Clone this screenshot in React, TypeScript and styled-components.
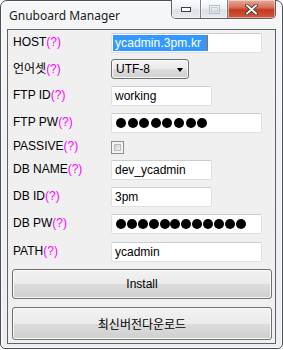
import React from "react";
import styled, { createGlobalStyle } from "styled-components";

const Global = createGlobalStyle`
  html, body { margin: 0; padding: 0; background: #ffffff; }
  body { font-family: "Liberation Sans", "Noto Sans CJK KR", sans-serif; font-size: 12px; color: #000; }
  * { box-sizing: border-box; }
`;

const Win = styled.div`
  width: 283px;
  height: 349px;
  border: 1px solid #4a4f55;
  border-radius: 7px 7px 5px 5px;
  background: linear-gradient(180deg, #f5f7f9 0%, #eff1f4 40%, #eceef1 100%);
  box-shadow: inset 0 0 0 1px rgba(255,255,255,0.85);
  display: flex;
  flex-direction: column;
  padding: 0 6px 4px 6px;
`;

const TitleBar = styled.div`
  height: 28px;
  display: flex;
  align-items: flex-start;
`;

const Title = styled.div`
  font-family: "Noto Sans", "Liberation Sans", sans-serif;
  font-size: 12px;
  line-height: 16px;
  color: #1a1a1a;
  padding: 7px 0 0 2px;
  flex: 1;
`;

const Caption = styled.div`
  display: flex;
  height: 19px;
  margin-top: -1px;
  border: 1px solid #5c6168;
  border-top: none;
  border-radius: 0 0 5px 5px;
  overflow: hidden;
  box-shadow: 0 1px 0 rgba(255,255,255,0.7);
`;

const CapBtn = styled.div<{ $w: number; $close?: boolean; $first?: boolean }>`
  width: ${(p) => p.$w}px;
  height: 100%;
  display: flex;
  align-items: center;
  justify-content: center;
  border-left: ${(p) => (p.$first ? "none" : "1px solid #7b8088")};
  background: ${(p) =>
    p.$close
      ? "linear-gradient(180deg, #e9a99a 0%, #d8735c 40%, #c53b1e 55%, #cf5a3f 100%)"
      : "linear-gradient(180deg, #fbfcfd 0%, #eef1f4 45%, #dde2e7 55%, #e6eaee 100%)"};
  box-shadow: inset 0 0 0 1px rgba(255,255,255,0.45);
`;

const Client = styled.div`
  flex: 1;
  border: 1px solid #5f6368;
  background: #f0f0f0;
  display: flex;
  flex-direction: column;
  padding-top: 3px;
`;

const Row = styled.div<{ $h: number }>`
  height: ${(p) => p.$h}px;
  display: flex;
  align-items: flex-start;
`;

const Label = styled.div<{ $off?: number }>`
  width: 103px;
  padding-left: 5px;
  line-height: 18px;
  margin-top: ${(p) => p.$off ?? 0}px;
  font-family: "Liberation Sans", "Noto Sans CJK KR", sans-serif;
  font-size: 12px;
  white-space: nowrap;
`;

const Help = styled.span`
  color: #ff00ff;
`;

const TextBox = styled.div<{ $w: number }>`
  width: ${(p) => p.$w}px;
  height: 20px;
  background: #fff;
  border: 1px solid #dcdfe3;
  border-top-color: #c9ccd1;
  border-radius: 2px;
  display: flex;
  align-items: center;
  padding-left: 3px;
  font-size: 12px;
  line-height: 16px;
  white-space: nowrap;
`;

const Selected = styled.span`
  background: #3399ff;
  color: #fff;
  line-height: 16px;
  padding-right: 6px;
  margin-left: -2px;
  padding-left: 2px;
  letter-spacing: 0.1px;
`;

const Caret = styled.span`
  display: inline-block;
  width: 1px;
  height: 16px;
  background: #b5651d;
`;

const Dots = styled.div<{ $gap: number }>`
  display: flex;
  gap: ${(p) => p.$gap}px;
  padding-left: 1px;
`;

const Dot = styled.span`
  width: 10px;
  height: 10px;
  border-radius: 50%;
  background: #000;
`;

const Select = styled.div`
  width: 78px;
  height: 20px;
  margin-top: -1px;
  border: 1px solid #707070;
  border-radius: 3px;
  background: linear-gradient(180deg, #f2f2f2 0%, #ebebeb 50%, #dddddd 50%, #cfcfcf 100%);
  box-shadow: inset 0 0 0 1px rgba(255,255,255,0.8);
  display: flex;
  align-items: center;
  justify-content: space-between;
  padding: 0 5px 0 4px;
  font-size: 12px;
`;

const Arrow = styled.span`
  width: 0;
  height: 0;
  border-left: 3.5px solid transparent;
  border-right: 3.5px solid transparent;
  border-top: 4px solid #000;
  margin-top: 1px;
`;

const Check = styled.div`
  width: 13px;
  height: 13px;
  margin-top: 1px;
  border: 1px solid #8e8f8f;
  background: #f4f4f4;
  padding: 2px;
  display: flex;
`;

const CheckInner = styled.div`
  flex: 1;
  border: 1px solid #b8bcc2;
  background: linear-gradient(135deg, #c9cdd2 0%, #e3e5e8 60%, #f3f3f3 100%);
`;

const Buttons = styled.div`
  display: flex;
  flex-direction: column;
  gap: 8px;
  padding-left: 4px;
`;

const Button = styled.div<{ $h: number }>`
  width: 260px;
  height: ${(p) => p.$h}px;
  border: 1px solid #707070;
  border-radius: 3px;
  background: linear-gradient(180deg, #f2f2f2 0%, #ebebeb 50%, #dddddd 50%, #cfcfcf 100%);
  box-shadow: inset 0 0 0 1px rgba(252,252,252,0.9);
  display: flex;
  align-items: center;
  justify-content: center;
  font-family: "Liberation Sans", "Noto Sans CJK KR", sans-serif;
  font-size: 12px;
`;

const KoText = styled.span`
  font-family: "Noto Sans CJK KR", sans-serif;
  font-size: 12px;
`;

const MinIcon = () => (
  <svg width="10" height="5" viewBox="0 0 10 5">
    <rect x="0.5" y="0.5" width="9" height="4" fill="#fff" stroke="#3b4047" />
  </svg>
);

const MaxIcon = () => (
  <svg width="11" height="9" viewBox="0 0 11 9">
    <rect x="0.5" y="0.5" width="10" height="8" fill="none" stroke="#b9bec4" />
    <rect x="2.5" y="2.5" width="6" height="4" fill="none" stroke="#c9ced3" />
  </svg>
);

const CloseIcon = () => (
  <svg width="13" height="11" viewBox="0 0 13 11">
    <path d="M2 1.5 L11 9.5 M11 1.5 L2 9.5" stroke="#3b3b3b" strokeWidth="3.6" strokeLinecap="square" />
    <path d="M2 1.5 L11 9.5 M11 1.5 L2 9.5" stroke="#ffffff" strokeWidth="1.8" strokeLinecap="square" />
  </svg>
);

const Field = ({ label }: { label: string }) => (
  <>
    {label}
    <Help>(?)</Help>
  </>
);

const Mask = ({ n, gap }: { n: number; gap: number }) => (
  <Dots $gap={gap}>
    {Array.from({ length: n }).map((_, i) => (
      <Dot key={i} />
    ))}
  </Dots>
);

export default function App() {
  return (
    <>
      <Global />
      <Win>
        <TitleBar>
          <Title>Gnuboard Manager</Title>
          <Caption>
            <CapBtn $w={28} $first>
              <MinIcon />
            </CapBtn>
            <CapBtn $w={27}>
              <MaxIcon />
            </CapBtn>
            <CapBtn $w={48} $close>
              <CloseIcon />
            </CapBtn>
          </Caption>
        </TitleBar>
        <Client>
          <Row $h={27}>
            <Label><Field label="HOST" /></Label>
            <TextBox $w={151}>
              <Selected>ycadmin.3pm.kr</Selected>
              <Caret />
            </TextBox>
          </Row>
          <Row $h={26}>
            <Label $off={-1}><KoText>언어셋</KoText><Help>(?)</Help></Label>
            <Select>
              <span>UTF-8</span>
              <Arrow />
            </Select>
          </Row>
          <Row $h={27}>
            <Label><Field label="FTP ID" /></Label>
            <TextBox $w={101}>working</TextBox>
          </Row>
          <Row $h={27}>
            <Label><Field label="FTP PW" /></Label>
            <TextBox $w={151}>
              <Mask n={8} gap={1.6} />
            </TextBox>
          </Row>
          <Row $h={20}>
            <Label $off={-3}><Field label="PASSIVE" /></Label>
            <Check>
              <CheckInner />
            </Check>
          </Row>
          <Row $h={27}>
            <Label><Field label="DB NAME" /></Label>
            <TextBox $w={101}>dev_ycadmin</TextBox>
          </Row>
          <Row $h={27}>
            <Label><Field label="DB ID" /></Label>
            <TextBox $w={101}>3pm</TextBox>
          </Row>
          <Row $h={28}>
            <Label><Field label="DB PW" /></Label>
            <TextBox $w={151}>
              <Mask n={12} gap={0.9} />
            </TextBox>
          </Row>
          <Row $h={27}>
            <Label><Field label="PATH" /></Label>
            <TextBox $w={151}>ycadmin</TextBox>
          </Row>
          <Buttons>
            <Button $h={30}>Install</Button>
            <Button $h={33}>
              <KoText>최신버전다운로드</KoText>
            </Button>
          </Buttons>
        </Client>
      </Win>
    </>
  );
}
